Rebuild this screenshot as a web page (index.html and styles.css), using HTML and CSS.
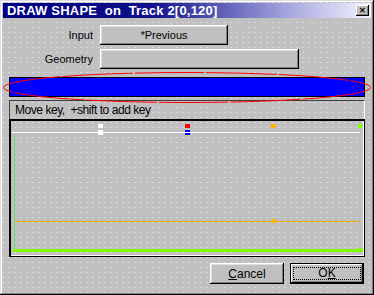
FILE: index.html
```html
<!DOCTYPE html>
<html lang="en">
<head>
  <meta charset="UTF-8" />
  <title>Draw Shape</title>
  <link rel="stylesheet" href="styles.css">
</head>
<body>

<div class="dialog">
  <div class="titlebar">
    <span class="title">DRAW SHAPE  on  Track 2[0,120]</span>
    <span class="close">&#x2715;</span>
  </div>

  <div class="content">
    <div class="field">
      <span class="label">Input</span>
      <button class="btn input-btn">*Previous</button>
    </div>
    <div class="field">
      <span class="label">Geometry</span>
      <button class="btn geo-btn"></button>
    </div>

    <div class="shape">
      <div class="bar"></div>
      <svg class="ellipse" width="370" height="34" viewBox="0 0 370 34">
        <ellipse cx="184" cy="15.5" rx="183.5" ry="15" fill="none" stroke="#ff0000" stroke-width="1" stroke-dasharray="70 2"/>
      </svg>
    </div>

    <div class="panel">
      <div class="hint">Move key,  +shift to add key</div>
      <div class="canvas">
        <!-- page coords minus (11,121) -->
        <svg width="352" height="134" viewBox="0 0 352 134" shape-rendering="crispEdges">
          <rect x="87" y="3" width="5" height="4" fill="#ffffff"/>
          <rect x="87" y="9" width="5" height="5" fill="#ffffff"/>
          <rect x="174" y="3" width="5" height="4" fill="#ff0000"/>
          <rect x="174" y="9" width="5" height="5" fill="#0000ff"/>
          <rect x="1" y="11" width="348" height="1" fill="#ffffff"/>
          <rect x="260" y="3" width="5" height="4" fill="#ffb400"/>
          <rect x="347" y="3" width="4" height="4" fill="#80ff00"/>

          <rect x="3" y="14" width="1" height="115" fill="#60e060"/>
          <rect x="3" y="100" width="346" height="1" fill="#f0a800"/>
          <rect x="261" y="98" width="4" height="4" fill="#ffb400"/>
          <rect x="2" y="128" width="349" height="3" fill="#80ff00"/>
          <rect x="348" y="127" width="4" height="4" fill="#80ff00"/>
        </svg>
      </div>
    </div>

    <div class="actions">
      <button class="btn action"><u>C</u>ancel</button>
      <button class="btn action default"><span class="focus">O<u>K</u></span></button>
    </div>
  </div>
</div>

</body>
</html>
```

FILE: styles.css
```css
body {
  margin: 0;
  background-color: #c0c0c0;
  font-family: 'Liberation Sans', Arial, sans-serif;
}
.dialog {
  width: 374px;
  height: 295px;
  box-sizing: border-box;
  padding: 3px;
  background-color: #c0c0c0;
  background-image: radial-gradient(circle, #d6d6e6 0.7px, transparent 1px);
  background-size: 6px 5px;
  box-shadow: inset -1px -1px #000, inset 1px 1px #dfdfdf, inset -2px -2px #808080, inset 2px 2px #fff;
}
.titlebar {
  height: 15px;
  display: flex;
  align-items: center;
  justify-content: space-between;
  padding: 0 2px 0 4px;
  background: linear-gradient(90deg, #000080 0%, #10108a 40%, #a8a8e0 78%, #f4f4ff 100%);
}
.title {
  color: #fff;
  font-weight: bold;
  font-size: 13px;
  letter-spacing: 0.2px;
  white-space: pre;
}
.close {
  width: 13px;
  height: 11px;
  background: #c0c0c0;
  box-shadow: inset -1px -1px #000, inset 1px 1px #fff, inset -2px -2px #808080;
  font-size: 8px;
  font-weight: bold;
  line-height: 11px;
  text-align: center;
  color: #000;
}
.content {
  padding: 7px 6px 0 6px;
}
.field {
  display: grid;
  grid-template-columns: 84px auto;
  column-gap: 7px;
  align-items: center;
  margin-bottom: 4px;
}
.label {
  text-align: right;
  font-size: 11px;
  color: #000;
}
.btn {
  height: 20px;
  margin: 0;
  padding: 0;
  border: none;
  background: #c0c0c0;
  box-shadow: inset -1px -1px #000, inset 1px 1px #fff, inset -2px -2px #808080, inset 2px 2px #dfdfdf;
  font-family: 'Liberation Sans', Arial, sans-serif;
  font-size: 11px;
  color: #000;
}
.input-btn {
  width: 128px;
}
.geo-btn {
  width: 199px;
}
.shape {
  position: relative;
  margin-top: 8px;
  height: 20px;
}
.bar {
  height: 18px;
  background: #0000ff;
  border: 1px solid #000;
}
.ellipse {
  position: absolute;
  left: -6px;
  top: -5px;
}
.panel {
  margin-top: 3px;
}
.hint {
  height: 18px;
  border: 1px solid #404040;
  border-right-color: #fff;
  border-bottom: none;
  padding-left: 5px;
  font-size: 12px;
  line-height: 19px;
  letter-spacing: -0.45px;
  white-space: pre;
  color: #000;
}
.canvas {
  height: 135px;
  border: 1px solid #000;
  border-top-width: 2px;
  border-left-width: 2px;
  box-shadow: inset -2px -2px 0 -1px #fff;
}
.canvas svg {
  display: block;
}
.actions {
  display: flex;
  justify-content: flex-end;
  gap: 6px;
  margin-top: 6px;
  padding-right: 1px;
}
.action {
  width: 74px;
  height: 21px;
  font-size: 12px;
}
.default {
  box-shadow: inset 0 0 0 1px #000, inset -2px -2px #000, inset 2px 2px #fff, inset -3px -3px #808080;
}
.focus {
  display: block;
  margin: 4px;
  height: 11px;
  line-height: 11px;
  outline: 1px dotted #000;
}
```
